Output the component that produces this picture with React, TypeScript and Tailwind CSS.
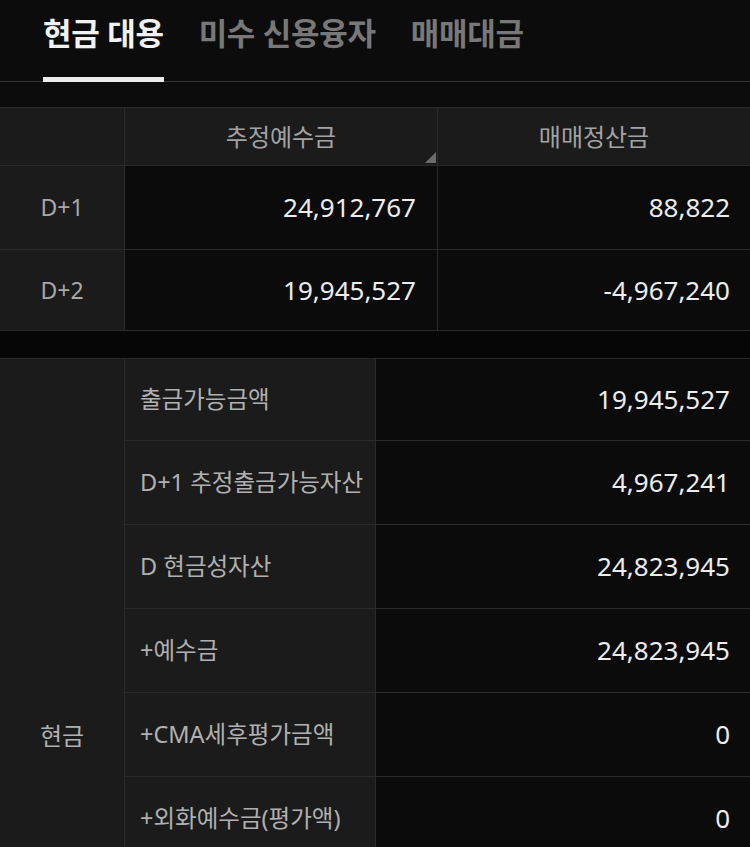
const font = { fontFamily: '"Noto Sans", "Noto Sans CJK KR", sans-serif' };

const tabs = [
  { label: "현금 대용", active: true },
  { label: "미수 신용융자", active: false },
  { label: "매매대금", active: false },
];

const settle = [
  { day: "D+1", deposit: "24,912,767", trade: "88,822" },
  { day: "D+2", deposit: "19,945,527", trade: "-4,967,240" },
];

const cashRows = [
  { label: "출금가능금액", value: "19,945,527" },
  { label: "D+1 추정출금가능자산", value: "4,967,241" },
  { label: "D 현금성자산", value: "24,823,945" },
  { label: "+예수금", value: "24,823,945" },
  { label: "+CMA세후평가금액", value: "0" },
  { label: "+외화예수금(평가액)", value: "0" },
  { label: "", value: "" },
  { label: "", value: "" },
  { label: "", value: "" },
];

export default function App() {
  return (
    <div
      className="w-[750px] h-[847px] overflow-hidden bg-[#0c0c0c] flex flex-col"
      style={font}
    >
      {/* tab bar */}
      <div className="h-[82px] shrink-0 flex gap-[35px] px-[43px] border-b border-[#353535]">
        {tabs.map((t) => (
          <div key={t.label} className="flex flex-col h-full">
            <span
              className={`pt-[13px] text-[31px] leading-[40px] font-bold tracking-[-0.3px] ${
                t.active ? "text-[#f2f2f2]" : "text-[#787878]"
              }`}
            >
              {t.label}
            </span>
            {t.active && <div className="mt-auto h-[5px] -mb-px bg-[#ececec]" />}
          </div>
        ))}
      </div>

      <div className="h-[25px] shrink-0" />

      {/* settlement table */}
      <div className="shrink-0 grid grid-cols-[124px_312px_1fr] grid-rows-[57px_83px_80px] gap-px bg-[#2a2a2a] border-y border-[#2a2a2a]">
        <div className="bg-[#1b1b1b]" />
        <div className="relative bg-[#1b1b1b] flex items-center justify-center text-[24px] text-[#a3a3a3]">
          추정예수금
          <svg className="absolute right-[1px] bottom-[2px]" width="11" height="11" viewBox="0 0 11 11">
            <polygon points="11,0 11,11 0,11" fill="#6c6c6c" />
          </svg>
        </div>
        <div className="bg-[#1b1b1b] flex items-center justify-center text-[24px] text-[#a3a3a3]">
          매매정산금
        </div>
        {settle.map((r) => (
          <div key={r.day} className="contents">
            <div className="bg-[#1b1b1b] flex items-center justify-center text-[23px] text-[#a8a8a8]">
              {r.day}
            </div>
            <div className="bg-[#0b0b0b] flex items-center justify-end pr-[21px] text-[26px] text-[#ededed]">
              {r.deposit}
            </div>
            <div className="bg-[#0b0b0b] flex items-center justify-end pr-[20px] text-[26px] text-[#ededed]">
              {r.trade}
            </div>
          </div>
        ))}
      </div>

      <div className="h-[27px] shrink-0 bg-[#060606]" />

      {/* cash table */}
      <div className="shrink-0 grid grid-cols-[124px_250px_1fr] grid-rows-[81px_repeat(8,83px)] gap-px bg-[#2a2a2a] border-t border-[#2a2a2a]">
        <div className="row-span-9 bg-[#1b1b1b] flex items-center justify-center text-[24px] text-[#b0b0b0]">
          현금
        </div>
        {cashRows.map((r, i) => (
          <div key={i} className="contents">
            <div className="bg-[#1b1b1b] flex items-center pl-[15px] text-[23.5px] text-[#b0b0b0]">
              {r.label}
            </div>
            <div className="bg-[#0b0b0b] flex items-center justify-end pr-[20px] text-[26px] text-[#ededed]">
              {r.value}
            </div>
          </div>
        ))}
      </div>
    </div>
  );
}
